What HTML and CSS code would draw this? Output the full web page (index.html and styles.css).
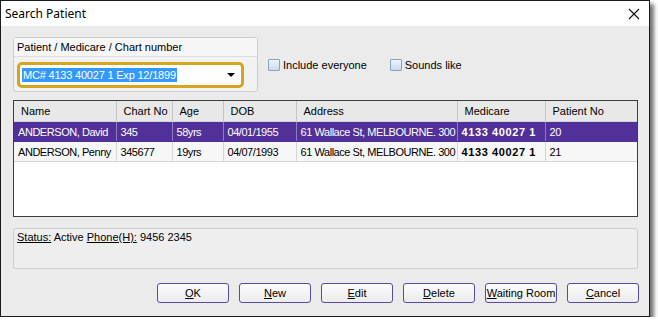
FILE: index.html
```html
<!DOCTYPE html>
<html lang="en">
<head>
    <meta charset="UTF-8">
    <title>Search Patient</title>
    <link rel="stylesheet" href="styles.css">
</head>
<body>
    <div class="window">
        <div class="titlebar">
            <span class="title">Search Patient</span>
            <svg class="close" width="12" height="12" viewBox="0 0 12 12">
                <path d="M1 1 L11 11 M11 1 L1 11" stroke="#111" stroke-width="1.1" fill="none"/>
            </svg>
        </div>
        <div class="content">
            <div class="top-row">
                <div class="group">
                    <div class="group-head">Patient / Medicare / Chart number</div>
                    <div class="group-body">
                        <div class="combo">
                            <span class="selected">MC# 4133 40027 1 Exp 12/1899</span>
                            <span class="arrow"></span>
                        </div>
                    </div>
                </div>
                <label class="check"><span class="box"></span>Include everyone</label>
                <label class="check"><span class="box"></span>Sounds like</label>
            </div>

            <div class="grid">
                <table>
                    <colgroup>
                        <col style="width:102px">
                        <col style="width:56px">
                        <col style="width:51px">
                        <col style="width:73px">
                        <col style="width:161px">
                        <col style="width:88px">
                        <col style="width:92px">
                    </colgroup>
                    <thead>
                        <tr>
                            <th>Name</th>
                            <th>Chart No</th>
                            <th>Age</th>
                            <th>DOB</th>
                            <th>Address</th>
                            <th>Medicare</th>
                            <th>Patient No</th>
                        </tr>
                    </thead>
                    <tbody>
                        <tr class="active">
                            <td>ANDERSON, David</td>
                            <td>345</td>
                            <td>58yrs</td>
                            <td>04/01/1955</td>
                            <td>61 Wallace St, MELBOURNE. 300</td>
                            <td class="bold">4133 40027 1</td>
                            <td>20</td>
                        </tr>
                        <tr>
                            <td>ANDERSON, Penny</td>
                            <td>345677</td>
                            <td>19yrs</td>
                            <td>04/07/1993</td>
                            <td>61 Wallace St, MELBOURNE. 300</td>
                            <td class="bold">4133 40027 1</td>
                            <td>21</td>
                        </tr>
                    </tbody>
                </table>
            </div>

            <div class="status">
                <u>Status:</u> Active <u>Phone(H):</u> 9456 2345
            </div>

            <div class="buttons">
                <button><u>O</u>K</button>
                <button><u>N</u>ew</button>
                <button><u>E</u>dit</button>
                <button><u>D</u>elete</button>
                <button><u>W</u>aiting Room</button>
                <button><u>C</u>ancel</button>
            </div>
        </div>
    </div>
</body>
</html>
```

FILE: styles.css
```css
body{
    margin: 0;
    background-color: #fff;
    font-family: "Liberation Sans", Arial, sans-serif;
    font-size: 11px;
    color: #000;
}
.window{
    width: 648px;
    height: 315px;
    border: 1px solid #1a1a1a;
    background-color: #ebebeb;
    box-shadow: 4px 4px 4px rgba(0,0,0,0.55);
    display: flex;
    flex-direction: column;
}
.titlebar{
    height: 25px;
    background-color: #fff;
    display: flex;
    align-items: center;
    justify-content: space-between;
    padding: 0 8px 0 4px;
}
.title{
    font-family: "Noto Sans", sans-serif;
    font-size: 12px;
    color: #000;
}
.close{
    margin-right: 1px;
}
.content{
    padding: 11px 10px 0 12px;
    display: flex;
    flex-direction: column;
}
.top-row{
    display: flex;
    align-items: flex-start;
}
.group{
    width: 243px;
    height: 53px;
    border: 1px solid #cdcdcd;
    border-radius: 3px;
    background-color: #f2f2f2;
}
.group-head{
    height: 18px;
    line-height: 18px;
    padding-left: 3px;
    border-bottom: 1px solid #dedede;
    background-color: #f6f6f6;
}
.group-body{
    padding: 5px 13px 0 3px;
}
.combo{
    height: 20px;
    border: 3px solid #d6a51c;
    border-radius: 5px;
    background-color: #fff;
    display: flex;
    align-items: center;
    justify-content: space-between;
    padding: 0 6px 0 2px;
}
.selected{
    background-color: #3399ff;
    color: #fff;
    line-height: 14px;
    padding: 0 1px;
    letter-spacing: -0.2px;
}
.arrow{
    width: 0;
    height: 0;
    border-left: 4px solid transparent;
    border-right: 4px solid transparent;
    border-top: 4px solid #000;
}
.check{
    display: flex;
    align-items: center;
    margin-top: 22px;
    margin-left: 10px;
    margin-right: 13px;
}
.box{
    width: 10px;
    height: 10px;
    border: 1px solid #8aa0bf;
    border-radius: 1px;
    background: linear-gradient(#eef4fb, #c9dbef);
    margin-right: 3px;
}
.grid{
    margin-top: 8px;
    width: 623px;
    height: 115px;
    border: 1px solid #3c3c3c;
    background-color: #fff;
    overflow: hidden;
}
table{
    border-collapse: collapse;
    table-layout: fixed;
    width: 623px;
}
th{
    height: 20px;
    font-weight: normal;
    text-align: left;
    padding: 0 0 0 7px;
    background-color: #e8e8e8;
    border-right: 1px solid #c4c4c4;
    border-bottom: 1px solid #d4d4d4;
    white-space: nowrap;
}
th:last-child{
    border-right: none;
}
td{
    height: 19px;
    padding: 0 0 0 4px;
    white-space: nowrap;
    overflow: hidden;
    letter-spacing: -0.45px;
    background-color: #f7f7f7;
    border-right: 1px solid #d6d6d6;
    border-bottom: 1px solid #d6d6d6;
}
td:last-child{
    border-right: none;
}
tr.active td{
    background-color: #52309a;
    color: #fff;
    border-right-color: #8f7bbf;
    border-bottom-color: #52309a;
}
td.bold{
    font-weight: bold;
    letter-spacing: 0.6px;
}
.status{
    margin-top: 11px;
    width: 620px;
    height: 37px;
    border: 1px solid #cfcfcf;
    border-radius: 2px;
    background-color: #eeeeee;
    padding: 2px 0 0 3px;
}
.buttons{
    margin-top: 14px;
    display: flex;
    justify-content: flex-end;
    gap: 10px;
}
button{
    width: 72px;
    height: 20px;
    font-family: "Liberation Sans", Arial, sans-serif;
    font-size: 11px;
    color: #000;
    border: 1px solid #5a4b9e;
    border-radius: 3px;
    background: linear-gradient(#fbfbfb, #ececec);
    padding: 0;
}
```
